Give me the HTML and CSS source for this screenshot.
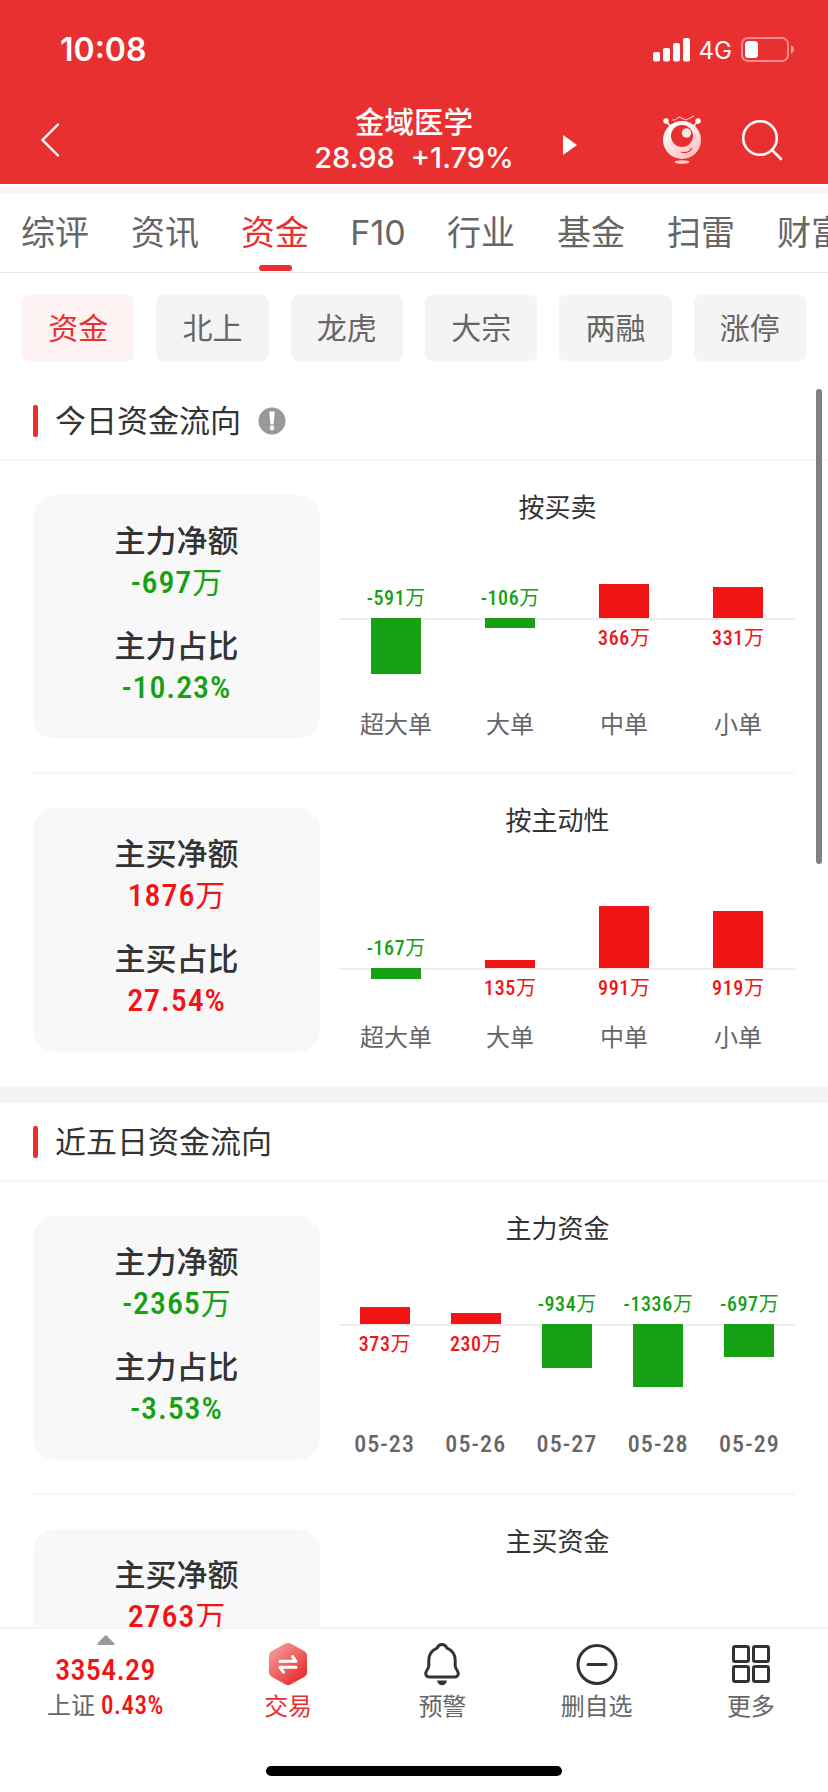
FILE: index.html
```html
<!DOCTYPE html>
<html lang="zh-CN">
<head>
    <meta charset="UTF-8">
    <meta name="viewport" content="width=device-width, initial-scale=1.0">
    <title>金域医学 - 资金</title>
    <link rel="stylesheet" href="styles.css">
</head>
<body>
    <div class="app">
        <!-- Header -->
        <header class="header">
            <div class="status-bar">
                <span class="time">10:08</span>
                <div class="status-icons">
                    <svg class="signal" width="38" height="24" viewBox="0 0 38 24" fill="#fff">
                        <rect x="0" y="14" width="7" height="9.5" rx="2"/>
                        <rect x="10" y="10" width="7" height="13.5" rx="2"/>
                        <rect x="20" y="5" width="7" height="18.5" rx="2"/>
                        <rect x="30" y="0" width="7" height="23.5" rx="2"/>
                    </svg>
                    <span class="network">4G</span>
                    <svg class="battery" width="54" height="26" viewBox="0 0 54 26">
                        <rect x="1" y="1" width="46" height="23" rx="6" fill="none" stroke="#fff" stroke-opacity="0.45" stroke-width="2"/>
                        <rect x="4" y="4" width="13" height="17" rx="3.5" fill="#fff"/>
                        <path d="M50 8c4 2 4 7 0 9z" fill="#fff" fill-opacity="0.5"/>
                    </svg>
                </div>
            </div>
            <nav class="title-bar">
                <svg class="back" width="20" height="36" viewBox="0 0 20 36" fill="none" stroke="#fff" stroke-width="2.4" stroke-linecap="round">
                    <path d="M17 2.500L1.500 18l15.500 15.500"/>
                </svg>
                <div class="stock">
                    <h1>金域医学</h1>
                    <p><span>28.98</span><span>+1.79%</span></p>
                </div>
                <div class="title-actions">
                    <svg class="next" width="14" height="22" viewBox="0 0 14 22" fill="#fff"><path d="M0 1l14 10L0 21z"/></svg>
                    <svg class="mascot" width="40" height="50" viewBox="0 0 40 50">
                        <defs>
                            <linearGradient id="mascotFill" x1="0" y1="0" x2="0.6" y2="1">
                                <stop offset="0.2" stop-color="#fff"/>
                                <stop offset="1" stop-color="#ffc0c0"/>
                            </linearGradient>
                        </defs>
                        <path d="M4 6l5 6M36 6l-5 6" stroke="#fff" stroke-width="1.500"/>
                        <circle cx="4" cy="6" r="2.700" fill="#fff"/>
                        <circle cx="36" cy="6" r="2.700" fill="#fff"/>
                        <path d="M10 5h3l4-3 7 3 8-4" fill="none" stroke="#ffdede" stroke-width="1"/>
                        <circle cx="20" cy="25" r="19" fill="url(#mascotFill)"/>
                        <circle cx="20" cy="21" r="11" fill="#e93030"/>
                        <circle cx="24.500" cy="18" r="4.700" fill="#ffe4e4"/>
                        <path d="M19 37c5 1.500 9-.5 11-4" fill="none" stroke="#e93030" stroke-width="1.300"/>
                        <ellipse cx="20" cy="47" rx="7.500" ry="1.700" fill="#ffc9c9"/>
                    </svg>
                    <svg class="search" width="42" height="42" viewBox="0 0 42 42" fill="none" stroke="#fff" stroke-width="2.600" stroke-linecap="round">
                        <circle cx="19" cy="19" r="16.800"/>
                        <path d="M31 31l9 9"/>
                    </svg>
                </div>
            </nav>
        </header>

        <!-- Tabs -->
        <div class="tabs">
            <a class="tab">综评</a>
            <a class="tab">资讯</a>
            <a class="tab active">资金</a>
            <a class="tab tab-latin">F10</a>
            <a class="tab">行业</a>
            <a class="tab">基金</a>
            <a class="tab">扫雷</a>
            <a class="tab">财富</a>
        </div>

        <div class="pills">
            <a class="pill active">资金</a>
            <a class="pill">北上</a>
            <a class="pill">龙虎</a>
            <a class="pill">大宗</a>
            <a class="pill">两融</a>
            <a class="pill">涨停</a>
        </div>

        <main class="content">
            <div class="scrollbar"></div>

            <!-- Today -->
            <section>
                <div class="section-title">
                    <h2>今日资金流向</h2>
                    <svg width="28" height="28" viewBox="0 0 28 28">
                        <circle cx="14" cy="14" r="13.500" fill="#999"/>
                        <path d="M11.300 4.500h5.400l-1.200 13h-3z" fill="#fff"/>
                        <circle cx="14" cy="21" r="2.400" fill="#fff"/>
                    </svg>
                </div>

                <div class="flow-row">
                    <div class="card">
                        <h3>主力净额</h3>
                        <p class="value down">-697<span>万</span></p>
                        <h3>主力占比</h3>
                        <p class="value down">-10.23%</p>
                    </div>
                    <div class="chart chart-trade">
                        <h4>按买卖</h4>
                        <div class="plot">
                            <div class="col">
                                <div class="above"><span class="label down">-591<i>万</i></span></div>
                                <div class="below"><div class="bar fall" style="height: 55.5px"></div></div>
                                <span class="category">超大单</span>
                            </div>
                            <div class="col">
                                <div class="above"><span class="label down">-106<i>万</i></span></div>
                                <div class="below"><div class="bar fall" style="height: 10px"></div></div>
                                <span class="category">大单</span>
                            </div>
                            <div class="col">
                                <div class="above"><div class="bar rise" style="height: 34.5px"></div></div>
                                <div class="below"><span class="label up">366<i>万</i></span></div>
                                <span class="category">中单</span>
                            </div>
                            <div class="col">
                                <div class="above"><div class="bar rise" style="height: 31px"></div></div>
                                <div class="below"><span class="label up">331<i>万</i></span></div>
                                <span class="category">小单</span>
                            </div>
                        </div>
                    </div>
                </div>

                <div class="flow-row">
                    <div class="card">
                        <h3>主买净额</h3>
                        <p class="value up">1876<span>万</span></p>
                        <h3>主买占比</h3>
                        <p class="value up">27.54%</p>
                    </div>
                    <div class="chart chart-active">
                        <h4>按主动性</h4>
                        <div class="plot">
                            <div class="col">
                                <div class="above"><span class="label down">-167<i>万</i></span></div>
                                <div class="below"><div class="bar fall" style="height: 11px"></div></div>
                                <span class="category">超大单</span>
                            </div>
                            <div class="col">
                                <div class="above"><div class="bar rise" style="height: 8px"></div></div>
                                <div class="below"><span class="label up">135<i>万</i></span></div>
                                <span class="category">大单</span>
                            </div>
                            <div class="col">
                                <div class="above"><div class="bar rise" style="height: 62px"></div></div>
                                <div class="below"><span class="label up">991<i>万</i></span></div>
                                <span class="category">中单</span>
                            </div>
                            <div class="col">
                                <div class="above"><div class="bar rise" style="height: 57.5px"></div></div>
                                <div class="below"><span class="label up">919<i>万</i></span></div>
                                <span class="category">小单</span>
                            </div>
                        </div>
                    </div>
                </div>
            </section>

            <!-- Last five days -->
            <section class="section-five">
                <div class="section-title">
                    <h2>近五日资金流向</h2>
                </div>

                <div class="flow-row">
                    <div class="card">
                        <h3>主力净额</h3>
                        <p class="value down">-2365<span>万</span></p>
                        <h3>主力占比</h3>
                        <p class="value down">-3.53%</p>
                    </div>
                    <div class="chart chart-daily">
                        <h4>主力资金</h4>
                        <div class="plot">
                            <div class="col">
                                <div class="above"><div class="bar rise" style="height: 17.5px"></div></div>
                                <div class="below"><span class="label up">373<i>万</i></span></div>
                                <span class="category date">05-23</span>
                            </div>
                            <div class="col">
                                <div class="above"><div class="bar rise" style="height: 11px"></div></div>
                                <div class="below"><span class="label up">230<i>万</i></span></div>
                                <span class="category date">05-26</span>
                            </div>
                            <div class="col">
                                <div class="above"><span class="label down">-934<i>万</i></span></div>
                                <div class="below"><div class="bar fall" style="height: 44px"></div></div>
                                <span class="category date">05-27</span>
                            </div>
                            <div class="col">
                                <div class="above"><span class="label down">-1336<i>万</i></span></div>
                                <div class="below"><div class="bar fall" style="height: 63px"></div></div>
                                <span class="category date">05-28</span>
                            </div>
                            <div class="col">
                                <div class="above"><span class="label down">-697<i>万</i></span></div>
                                <div class="below"><div class="bar fall" style="height: 33px"></div></div>
                                <span class="category date">05-29</span>
                            </div>
                        </div>
                    </div>
                </div>

                <div class="flow-row">
                    <div class="card">
                        <h3>主买净额</h3>
                        <p class="value up">2763<span>万</span></p>
                    </div>
                    <div class="chart">
                        <h4>主买资金</h4>
                    </div>
                </div>
            </section>
        </main>

        <!-- Bottom Bar -->
        <footer class="bottom">
            <div class="toolbar">
                <div class="index">
                    <svg width="20" height="12" viewBox="0 0 20 12" fill="#999"><path d="M10 1L18.500 9.500Q19 11 17.500 11H2.500Q1 11 1.500 9.500L8.500 2Q10 .5 11.500 2z"/></svg>
                    <strong>3354.29</strong>
                    <p>上证 <b>0.43%</b></p>
                </div>
                <a class="tool active">
                    <svg width="42" height="44" viewBox="0 0 42 44">
                        <defs>
                            <linearGradient id="tradeFill" x1="0.1" y1="0.1" x2="0.8" y2="0.9">
                                <stop offset="0" stop-color="#f59a9a"/>
                                <stop offset="1" stop-color="#e93030"/>
                            </linearGradient>
                        </defs>
                        <path d="M18.500 1.600q2.500-1.400 5 0l14 7.700q2.500 1.400 2.500 4v17.400q0 2.600-2.500 4l-14 7.700q-2.500 1.400-5 0l-14-7.700q-2.500-1.400-2.500-4V13.300q0-2.600 2.500-4z" fill="url(#tradeFill)"/>
                        <path d="M13 19.300h16l-3.500-4.800M29 25.300H13l3.500 4.800" fill="none" stroke="#fff" stroke-width="3" stroke-linecap="round" stroke-linejoin="round"/>
                    </svg>
                    <span>交易</span>
                </a>
                <a class="tool">
                    <svg width="42" height="44" viewBox="0 0 42 44" fill="none" stroke="#333" stroke-width="3" stroke-linejoin="round">
                        <path d="M21 2.500c-2.700 0-4.200 1.500-5 3.700C10.500 8.500 7.800 13 7.800 18.500v5c0 2-.8 3.300-2 5-2.300 3.300-.8 6.500 2.700 6.500h25c3.500 0 5-3.200 2.700-6.500-1.200-1.700-2-3-2-5v-5c0-5.500-2.700-10-8.200-12.300-.8-2.200-2.300-3.700-5-3.700z"/>
                        <path d="M16 38.500h10c-.5 3-2.500 4.700-5 4.700s-4.500-1.700-5-4.700z" fill="#333" stroke="none"/>
                    </svg>
                    <span>预警</span>
                </a>
                <a class="tool">
                    <svg width="42" height="44" viewBox="0 0 42 44" fill="none" stroke="#333" stroke-width="3" stroke-linecap="round">
                        <circle cx="21" cy="22.500" r="19"/>
                        <path d="M12 22.500h18"/>
                    </svg>
                    <span>删自选</span>
                </a>
                <a class="tool">
                    <svg width="42" height="44" viewBox="0 0 42 44" fill="none" stroke="#333" stroke-width="3">
                        <rect x="3.500" y="4.500" width="15" height="15" rx="1.500"/>
                        <rect x="23.500" y="4.500" width="15" height="15" rx="1.500"/>
                        <rect x="3.500" y="24.500" width="15" height="15" rx="1.500"/>
                        <rect x="23.500" y="24.500" width="15" height="15" rx="1.500"/>
                    </svg>
                    <span>更多</span>
                </a>
            </div>
            <div class="home-indicator"></div>
        </footer>
    </div>
</body>
</html>
```
FILE: styles.css
```css
* {
    margin: 0;
    padding: 0;
    box-sizing: border-box;
}

body {
    font-family: Inter, "Noto Sans CJK SC", sans-serif;
    background-color: #fff;
    color: #333;
}

svg {
    display: block;
    flex-shrink: 0;
}

.app {
    display: flex;
    flex-direction: column;
    width: 828px;
    height: 1792px;
    overflow: hidden;
}

/* Header */
.header {
    height: 184px;
    background-color: #e93030;
    color: #fff;
}

.status-bar {
    display: flex;
    justify-content: space-between;
    align-items: center;
    height: 99px;
    padding: 0 33px 0 60px;
}

.time {
    font-size: 32px;
    font-weight: 600;
}

.status-icons {
    display: flex;
    align-items: center;
}

.network {
    margin: 2px 9px 0 8px;
    font-size: 24px;
    line-height: 26px;
}

.title-bar {
    display: grid;
    grid-template-columns: 1fr auto 1fr;
    height: 85px;
}

.back {
    margin: 23px 0 0 41px;
}

.stock {
    text-align: center;
}

.stock h1 {
    margin-top: 6px;
    font-size: 29.5px;
    font-weight: 500;
    line-height: 34px;
}

.stock p {
    display: flex;
    gap: 16px;
    font-size: 29px;
    font-weight: 500;
    line-height: 38px;
}

.title-actions {
    display: flex;
}

.next {
    margin: 35px 85px 0 49px;
}

.mascot {
    margin-top: 16px;
}

.search {
    margin: 20px 0 0 39px;
}

/* Tabs */
.tabs {
    display: flex;
    gap: 42px;
    height: 86px;
    margin-top: 3px;
    padding-left: 21px;
    border-top: 6px solid #f4f4f4;
    border-bottom: 1px solid #e8e8e8;
    overflow: hidden;
}

.tab {
    display: flex;
    flex-direction: column;
    flex-shrink: 0;
    align-items: center;
    width: 68px;
    padding-top: 19px;
    font-size: 34px;
    line-height: 42px;
    color: #666;
    white-space: nowrap;
}

.tab-latin {
    width: 54px;
}

.tab.active {
    color: #e93030;
}

.tab.active::after {
    content: "";
    width: 33px;
    height: 6px;
    margin-top: 11px;
    border-radius: 3px;
    background-color: #e93030;
}

.pills {
    display: grid;
    grid-template-columns: repeat(6, 1fr);
    gap: 22px;
    padding: 22px 22px 0;
}

.pill {
    height: 66px;
    border-radius: 7px;
    background-color: #f4f4f4;
    font-size: 30px;
    line-height: 66px;
    text-align: center;
    color: #666;
}

.pill.active {
    background-color: #fff2f2;
    color: #e93030;
}

/* Content */
.content {
    position: relative;
    flex: 1;
    min-height: 0;
    margin-top: 21px;
    overflow: hidden;
}

.scrollbar {
    position: absolute;
    top: 7px;
    right: 6px;
    width: 6px;
    height: 475px;
    border-radius: 3px;
    background-color: #808080;
}

.section-title {
    display: flex;
    align-items: center;
    height: 79px;
    padding-left: 33px;
    border-bottom: 2px solid #f5f5f5;
}

.section-title::before {
    content: "";
    width: 5px;
    height: 32px;
    margin-right: 17px;
    border-radius: 2px;
    background-color: #e93030;
}

.section-title h2 {
    font-size: 31px;
    font-weight: 400;
    line-height: 36px;
}

.section-title svg {
    margin-left: 17px;
}

.section-five {
    border-top: 16px solid #f4f4f4;
}

.flow-row {
    display: flex;
    height: 313px;
    margin: 0 33px;
    padding: 34px 0 33px;
    border-bottom: 2px solid #f5f5f5;
}

.flow-row:last-child {
    border-bottom: none;
}

.card {
    width: 287px;
    height: 244px;
    padding-top: 27px;
    border-radius: 22px;
    background-color: #f8f8f8;
    text-align: center;
}

.card h3 {
    font-size: 31px;
    font-weight: 500;
    line-height: 38px;
}

.value {
    margin-bottom: 22px;
    font-family: Roboto, "Noto Sans CJK SC", sans-serif;
    font-size: 32px;
    font-weight: 500;
    font-stretch: 75%;
    line-height: 44px;
    letter-spacing: 0.9px;
}

.value span {
    font-size: 30px;
    font-weight: 400;
    letter-spacing: 0;
}

.up {
    color: #f21414;
}

.down {
    color: #16a014;
}

/* Charts */
.chart {
    flex: 1;
    text-align: center;
}

.chart h4 {
    font-size: 26px;
    font-weight: 400;
    line-height: 26px;
}

.plot {
    display: flex;
    margin: 0 0 0 19px;
}

.col {
    flex: 1;
    min-width: 0;
}

.above,
.below {
    display: flex;
    flex-direction: column;
    align-items: center;
}

.above {
    justify-content: flex-end;
    height: 97px;
}

.below {
    height: 95px;
    box-shadow: inset 0 2px #eee;
}

.chart-active .above {
    height: 134px;
}

.chart-active .below {
    height: 58px;
}

.chart-daily .above {
    height: 82px;
}

.chart-daily .below {
    height: 108px;
}

.bar {
    width: 50px;
}

.rise {
    background-color: #f21414;
}

.fall {
    background-color: #16a014;
}

.label {
    margin: 10px 0;
    font-family: Roboto, "Noto Sans CJK SC", sans-serif;
    font-size: 20px;
    font-weight: 500;
    font-stretch: 75%;
    line-height: 20px;
    letter-spacing: 0.6px;
    white-space: nowrap;
}

.label i {
    font-style: normal;
    font-weight: 400;
    letter-spacing: 0;
}

.category {
    display: block;
    font-size: 24px;
    line-height: 24px;
    color: #666;
}

.date {
    font-family: Roboto, sans-serif;
    font-weight: 500;
    font-stretch: 75%;
    letter-spacing: 1.1px;
}

/* Bottom Bar */
.bottom {
    height: 165px;
    border-top: 2px solid #f4f4f4;
}

.toolbar {
    display: flex;
    height: 137px;
}

.index {
    display: flex;
    flex-direction: column;
    align-items: center;
    width: 211px;
    padding-top: 5px;
    font-family: Roboto, "Noto Sans CJK SC", sans-serif;
}

.index strong {
    margin-top: 4px;
    font-size: 30px;
    font-weight: 500;
    font-stretch: 75%;
    line-height: 40px;
    letter-spacing: 0.3px;
    color: #f21414;
}

.index p {
    font-size: 24px;
    line-height: 32px;
    color: #666;
}

.index b {
    font-size: 25px;
    font-weight: 500;
    font-stretch: 75%;
    letter-spacing: 0.5px;
    color: #f21414;
}

.tool {
    display: flex;
    flex: 1;
    flex-direction: column;
    align-items: center;
    padding-top: 13px;
    font-size: 24px;
    line-height: 30px;
    color: #666;
}

.tool.active {
    color: #e93030;
}

.tool span {
    margin-top: 6px;
}

.home-indicator {
    width: 296px;
    height: 10px;
    margin: 0 auto;
    border-radius: 5px;
    background-color: #000;
}
```
